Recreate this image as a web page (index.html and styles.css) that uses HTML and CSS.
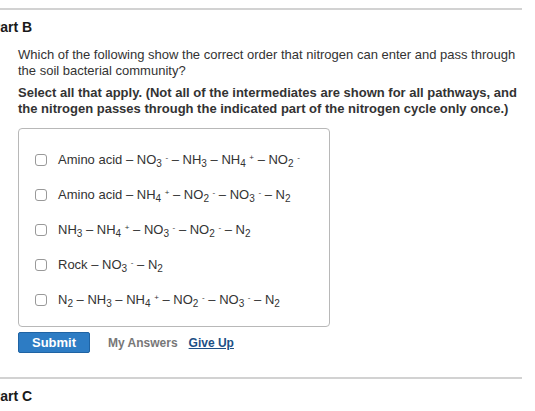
FILE: index.html
```html
<!DOCTYPE html>
<html>
<head>
<meta charset="utf-8">
<link rel="stylesheet" href="styles.css">
</head>
<body>
<div class="page">
  <section class="part">
    <h2 class="part-title">Part B</h2>
    <div class="part-body">
      <p class="question">Which of the following show the correct order that nitrogen can enter and pass through the soil bacterial community?</p>
      <p class="instruction">Select all that apply. (Not all of the intermediates are shown for all pathways, and the nitrogen passes through the indicated part of the nitrogen cycle only once.)</p>
      <div class="options">
        <label class="option"><span class="check"></span><span class="label">Amino acid – NO<sub>3</sub> <sup>-</sup> – NH<sub>3</sub> – NH<sub>4</sub> <sup>+</sup> – NO<sub>2</sub> <sup>-</sup></span></label>
        <label class="option"><span class="check"></span><span class="label">Amino acid – NH<sub>4</sub> <sup>+</sup> – NO<sub>2</sub> <sup>-</sup> – NO<sub>3</sub> <sup>-</sup> – N<sub>2</sub></span></label>
        <label class="option"><span class="check"></span><span class="label">NH<sub>3</sub> – NH<sub>4</sub> <sup>+</sup> – NO<sub>3</sub> <sup>-</sup> – NO<sub>2</sub> <sup>-</sup> – N<sub>2</sub></span></label>
        <label class="option"><span class="check"></span><span class="label">Rock – NO<sub>3</sub> <sup>-</sup> – N<sub>2</sub></span></label>
        <label class="option"><span class="check"></span><span class="label">N<sub>2</sub> – NH<sub>3</sub> – NH<sub>4</sub> <sup>+</sup> – NO<sub>2</sub> <sup>-</sup> – NO<sub>3</sub> <sup>-</sup> – N<sub>2</sub></span></label>
      </div>
      <div class="actions">
        <button class="submit">Submit</button>
        <span class="my-answers">My Answers</span>
        <a class="give-up" href="#">Give Up</a>
      </div>
    </div>
  </section>
  <section class="part">
    <h2 class="part-title">Part C</h2>
  </section>
</div>
</body>
</html>
```

FILE: styles.css
```css
html, body {
  margin: 0;
  padding: 0;
  background: #fff;
}
body {
  font-family: "Liberation Sans", Arial, sans-serif;
  color: #222;
}
.page {
  padding-top: 8px;
}
.part {
  margin-left: -9px;
  width: 531px;
  border-top: 2px solid #d2d2d2;
}
.part-title {
  margin: 0;
  padding-top: 9px;
  font-size: 14px;
  line-height: 16px;
  font-weight: bold;
  color: #1a1a1a;
}
.part-body {
  padding-left: 27px;
  padding-bottom: 24px;
}
.question {
  margin: 12px 0 0;
  font-size: 13px;
  line-height: 16px;
  color: #333;
}
.instruction {
  margin: 6px 0 0;
  font-size: 13px;
  line-height: 16px;
  font-weight: bold;
  color: #333;
}
.options {
  margin-top: 11px;
  width: 312px;
  height: 199px;
  border: 1px solid #b8b8b8;
  border-radius: 4px;
  box-sizing: border-box;
  display: flex;
  flex-direction: column;
  padding-top: 13px;
}
.option {
  display: flex;
  align-items: center;
  height: 35px;
  flex: none;
  padding-left: 16px;
  font-size: 13px;
  color: #333;
}
.check {
  width: 10px;
  height: 10px;
  border: 1px solid #999;
  border-radius: 3px;
  background: #fff;
  margin-right: 11px;
  flex: none;
}
.label sub {
  font-size: 10px;
  vertical-align: -3px;
  line-height: 0;
}
.label sup {
  font-size: 8px;
  vertical-align: 4px;
  line-height: 0;
}
.actions {
  margin-top: 5px;
  display: flex;
  align-items: center;
  height: 21px;
}
.submit {
  width: 72px;
  height: 21px;
  background: #2d7cc4;
  border: 1px solid #1f63a3;
  border-radius: 2px;
  color: #fff;
  font-family: "Liberation Sans", Arial, sans-serif;
  font-weight: bold;
  font-size: 13px;
  padding: 0;
}
.my-answers {
  margin-left: 18px;
  font-size: 12px;
  font-weight: bold;
  color: #777;
}
.give-up {
  margin-left: 11px;
  font-size: 12px;
  font-weight: bold;
  color: #1d4f85;
  text-decoration: underline;
}
```
